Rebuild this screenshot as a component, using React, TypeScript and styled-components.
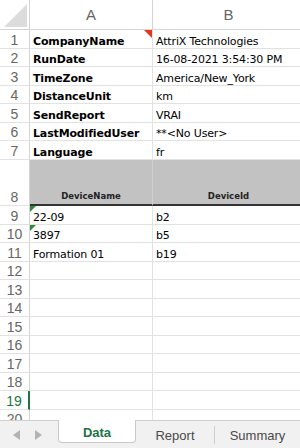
import React from 'react';
import styled, { createGlobalStyle, css } from 'styled-components';

const GlobalStyle = createGlobalStyle`
  html, body {
    margin: 0;
    padding: 0;
    background: #ffffff;
  }
  body {
    width: 300px;
    height: 448px;
    overflow: hidden;
  }
`;

const ROW = 18.5;

const Screen = styled.div`
  width: 300px;
  height: 448px;
  display: flex;
  flex-direction: column;
  overflow: hidden;
`;

// header row, 7 info rows, the tall table-header row, then plain rows
const Sheet = styled.div`
  flex: 1;
  overflow: hidden;
  display: grid;
  grid-template-columns: 30px 123px 152px;
  grid-template-rows: 30px repeat(7, ${ROW}px) 46.5px;
  grid-auto-rows: ${ROW}px;
  width: 305px;
  align-content: start;
`;

const Corner = styled.div`
  box-sizing: border-box;
  border-right: 1px solid #d4d4d4;
  border-bottom: 1px solid #d4d4d4;
  position: relative;
  &::after {
    content: '';
    position: absolute;
    right: 2px;
    bottom: 2px;
    width: 0;
    height: 0;
    border-left: 23px solid transparent;
    border-bottom: 23px solid #dcdcdc;
  }
`;

const ColHead = styled.div`
  box-sizing: border-box;
  border-right: 1px solid #d4d4d4;
  border-bottom: 1px solid #d4d4d4;
  display: flex;
  align-items: center;
  justify-content: center;
  font-family: 'Liberation Sans', Arial, sans-serif;
  font-size: 15px;
  color: #666666;
`;

const RowHead = styled.div<{ $active?: boolean }>`
  box-sizing: border-box;
  border-right: 1px solid #d4d4d4;
  border-bottom: 1px solid #e2e2e2;
  display: flex;
  align-items: flex-end;
  justify-content: center;
  line-height: 16px;
  font-family: 'Liberation Sans', Arial, sans-serif;
  font-size: 14px;
  color: ${(p) => (p.$active ? '#217346' : '#666666')};
  ${(p) =>
    p.$active &&
    css`
      border-right: 2px solid #217346;
    `}
`;

const Cell = styled.div<{ $bold?: boolean; $flag?: 'red' | 'green' }>`
  position: relative;
  box-sizing: border-box;
  border-right: 1px solid #e2e2e2;
  border-bottom: 1px solid #e2e2e2;
  padding: 0 3px;
  display: flex;
  align-items: flex-end;
  line-height: 13px;
  white-space: nowrap;
  overflow: hidden;
  font-family: 'DejaVu Sans', Verdana, sans-serif;
  font-size: 11px;
  letter-spacing: -0.15px;
  font-weight: ${(p) => (p.$bold ? 700 : 400)};
  color: #000000;
  ${(p) =>
    p.$flag === 'red' &&
    css`
      &::after {
        content: '';
        position: absolute;
        top: 0;
        right: 0;
        border-left: 8px solid transparent;
        border-top: 8px solid #e8331e;
      }
    `}
  ${(p) =>
    p.$flag === 'green' &&
    css`
      &::after {
        content: '';
        position: absolute;
        top: 0;
        left: 0;
        border-right: 6px solid transparent;
        border-top: 6px solid #2f8a3c;
      }
    `}
`;

const HeaderCell = styled.div`
  box-sizing: border-box;
  background: #c2c2c2;
  border-right: 1px solid #d0d0d0;
  border-bottom: 2px solid #333333;
  display: flex;
  align-items: flex-end;
  justify-content: center;
  padding-bottom: 3px;
  font-family: 'DejaVu Sans', Verdana, sans-serif;
  font-size: 8.5px;
  font-weight: 700;
  color: #222222;
`;

const TabBar = styled.div`
  height: 28px;
  flex-shrink: 0;
  background: #f1f1f1;
  border-top: 1px solid #cfcfcf;
  box-sizing: border-box;
  display: flex;
  align-items: flex-start;
`;

const Arrows = styled.div`
  width: 58px;
  height: 27px;
  display: flex;
  align-items: center;
  gap: 15px;
  padding-left: 13px;
  box-sizing: border-box;
`;

const Tab = styled.div<{ $active?: boolean; $w: number; $sep?: boolean }>`
  width: ${(p) => p.$w}px;
  box-sizing: border-box;
  display: flex;
  align-items: center;
  justify-content: center;
  font-family: 'Liberation Sans', Arial, sans-serif;
  font-size: 13px;
  ${(p) =>
    p.$active
      ? css`
          height: 23px;
          margin-top: -1px;
          background: #ffffff;
          border: 1px solid #c9c9c9;
          border-top: none;
          border-radius: 0 0 4px 4px;
          color: #217346;
          font-weight: 700;
          padding-top: 3px;
        `
      : css`
          height: 18px;
          margin-top: 5px;
          color: #4a4a4a;
          border-left: ${p.$sep ? '1px solid #cfcfcf' : 'none'};
        `}
`;

const Arrow = ({ dir }: { dir: 'left' | 'right' }) => (
  <svg width="7" height="10" viewBox="0 0 7 10">
    <path d={dir === 'left' ? 'M7 0 L0 5 L7 10 Z' : 'M0 0 L7 5 L0 10 Z'} fill="#b3b3b3" />
  </svg>
);

const info: [string, string][] = [
  ['CompanyName', 'AttriX Technologies'],
  ['RunDate', '16-08-2021 3:54:30 PM'],
  ['TimeZone', 'America/New_York'],
  ['DistanceUnit', 'km'],
  ['SendReport', 'VRAI'],
  ['LastModifiedUser', '**<No User>'],
  ['Language', 'fr'],
];

const devices: [string, string][] = [
  ['22-09', 'b2'],
  ['3897', 'b5'],
  ['Formation 01', 'b19'],
];

export default function App() {
  const empty = Array.from({ length: 9 }, (_, i) => i + 12);
  return (
    <Screen>
      <GlobalStyle />
      <Sheet>
        <Corner />
        <ColHead>A</ColHead>
        <ColHead>B</ColHead>

        {info.map(([k, v], i) => (
          <React.Fragment key={k}>
            <RowHead>{i + 1}</RowHead>
            <Cell $bold $flag={i === 0 ? 'red' : undefined}>{k}</Cell>
            <Cell>{v}</Cell>
          </React.Fragment>
        ))}

        <RowHead>8</RowHead>
        <HeaderCell>DeviceName</HeaderCell>
        <HeaderCell>DeviceId</HeaderCell>

        {devices.map(([n, id], i) => (
          <React.Fragment key={n}>
            <RowHead>{i + 9}</RowHead>
            <Cell $flag={i < 2 ? 'green' : undefined}>{n}</Cell>
            <Cell>{id}</Cell>
          </React.Fragment>
        ))}

        {empty.map((n) => (
          <React.Fragment key={n}>
            <RowHead $active={n === 19}>{n}</RowHead>
            <Cell />
            <Cell />
          </React.Fragment>
        ))}
      </Sheet>
      <TabBar>
        <Arrows>
          <Arrow dir="left" />
          <Arrow dir="right" />
        </Arrows>
        <Tab $active $w={78}>Data</Tab>
        <Tab $w={78}>Report</Tab>
        <Tab $w={86} $sep>Summary</Tab>
      </TabBar>
    </Screen>
  );
}
